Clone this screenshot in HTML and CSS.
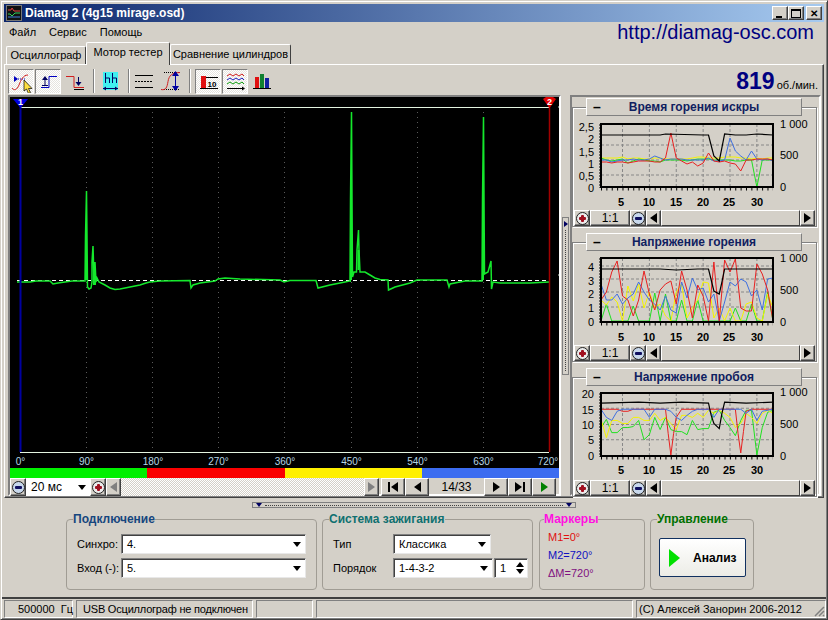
FILE: index.html
```html
<!DOCTYPE html>
<html lang="ru">
<head>
    <meta charset="UTF-8">
    <title>Diamag 2 (4g15 mirage.osd)</title>
    <link rel="stylesheet" href="styles.css">
</head>
<body>
<div class="window">
    <div class="titlebar">
        <svg class="app-icon" width="16" height="16" viewBox="0 0 16 16">
            <rect width="16" height="16" fill="#111"/>
            <rect x="0.5" y="0.5" width="15" height="15" fill="none" stroke="#777"/>
            <path d="M2 5h3l1-2 2 3h6" fill="none" stroke="#e04040"/>
            <path d="M2 9h2l2 2 3-3h5" fill="none" stroke="#30d060"/>
            <path d="M2 12h12" fill="none" stroke="#4080e0"/>
        </svg>
        <span class="title-text">Diamag 2 (4g15 mirage.osd)</span>
        <div class="win-buttons">
            <button class="win-btn"><i class="glyph-min"></i></button>
            <button class="win-btn"><i class="glyph-max"></i></button>
            <button class="win-btn close-btn">✕</button>
        </div>
    </div>

    <div class="menubar">
        <span>Файл</span><span>Сервис</span><span>Помощь</span>
        <span class="site-url">http://diamag-osc.com</span>
    </div>

    <div class="tabs">
        <div class="tab tab-first">Осциллограф</div>
        <div class="tab tab-active">Мотор тестер</div>
        <div class="tab tab-last">Сравнение цилиндров</div>
    </div>

    <div class="page">
        <!-- Toolbar -->
        <div class="toolbar">
            <button class="tool pressed">
                <svg width="24" height="24" viewBox="0 0 24 24">
                    <path d="M5 7l4 3-4 3z" fill="#0000c0"/>
                    <path d="M9 10h7" stroke="#0000c0" stroke-dasharray="1 1"/>
                    <path d="M3 19c2 3 5 2 7-3s4-10 9-10" fill="none" stroke="#d02020"/>
                    <path d="M15 11v11l2.500-2 2 4.500 2-1-2-4h3.500z" fill="#ffe040" stroke="#000" stroke-width="0.7"/>
                </svg>
            </button>
            <button class="tool pressed">
                <svg width="24" height="24" viewBox="0 0 24 24">
                    <path d="M5 18.500h8v-11h8" fill="none" stroke="#0000c0"/>
                    <path d="M9 7l-3 4h6z" fill="#000060"/>
                    <path d="M9 10v6M6 16.500h6" stroke="#000060"/>
                </svg>
            </button>
            <button class="tool flat">
                <svg width="24" height="24" viewBox="0 0 24 24">
                    <path d="M3 7.500h8v11h10" fill="none" stroke="#d02020"/>
                    <path d="M15.500 8v7" stroke="#000060"/>
                    <path d="M12.500 13h6l-3 4z" fill="#000060"/>
                    <path d="M11 20.500h10" stroke="#000"/>
                </svg>
            </button>
            <i class="sep"></i>
            <svg class="plain-icon" width="22" height="24" viewBox="0 0 22 24">
                <rect x="4" y="3" width="15" height="18" fill="#40f0f0"/>
                <path d="M6.500 4v10M6.500 9h4M10.500 9v5M13.500 4v10M13.500 9h4M17.500 9v5" fill="none" stroke="#000060"/>
                <path d="M4 19.500h15" stroke="#000060"/>
                <path d="M4 19.500l3-2v4zM19 19.500l-3-2v4z" fill="#000060"/>
            </svg>
            <i class="sep"></i>
            <svg class="plain-icon" width="20" height="24" viewBox="0 0 20 24">
                <path d="M1 6.500h18M1 18.500h18" stroke="#000"/>
                <path d="M1 12.500h18" stroke="#000" stroke-dasharray="2 1"/>
            </svg>
            <svg class="plain-icon scurve-icon" width="22" height="24" viewBox="0 0 22 24">
                <path d="M4 3.500h16M4 20.500h16" stroke="#000" stroke-dasharray="1 1"/>
                <path d="M1 20.500c5 1 6-2 7-8s4-9 12-9" fill="none" stroke="#d02020"/>
                <path d="M15.500 5v14" stroke="#0000a0"/>
                <path d="M15.500 2l-3.500 5h7zM15.500 22l-3.500-5h7z" fill="#0000a0"/>
            </svg>
            <i class="sep"></i>
            <button class="tool pressed">
                <svg width="24" height="24" viewBox="0 0 24 24">
                    <rect x="5" y="7" width="5" height="12" fill="#e01010"/>
                    <path d="M4 19.500h18M10 8.500h12" stroke="#000"/>
                    <text x="16" y="17.500" class="icon-digits">10</text>
                </svg>
            </button>
            <button class="tool pressed">
                <svg width="24" height="24" viewBox="0 0 24 24">
                    <path d="M4 7l3-2 3 2 3-2 3 2 3-2 2 2" fill="none" stroke="#d02020"/>
                    <path d="M4 11l3-2 3 2 3-2 3 2 3-2 2 2" fill="none" stroke="#2020c0"/>
                    <path d="M4 15l3-2 3 2 3-2 3 2 3-2 2 2" fill="none" stroke="#10a010"/>
                    <path d="M4 19.500h17" stroke="#000"/>
                    <path d="M22 19.500l-3-2v4z" fill="#000"/>
                </svg>
            </button>
            <svg class="plain-icon bars-icon" width="22" height="24" viewBox="0 0 22 24">
                <rect x="4" y="8" width="4" height="11" fill="#e01010"/>
                <rect x="9" y="5" width="4" height="14" fill="#108030"/>
                <rect x="14" y="9" width="4" height="10" fill="#1020a0"/>
                <path d="M2 19.500h18" stroke="#000"/>
            </svg>
            <div class="rpm"><b>819</b> <span>об./мин.</span></div>
        </div>

        <div class="workspace">
            <!-- Scope -->
            <div class="scope-col">
                <svg class="scope" width="549" height="371" viewBox="10 97 549 371">
                    <rect x="10" y="97" width="549" height="371" fill="#000"/>
                    <g class="scope-grid">
                        <path d="M86.500 112V452M152.500 112V452M218.500 112V452M284.500 112V452M351.500 112V452M417.500 112V452M483.500 112V452"/>
                    </g>
                    <path d="M20 107.500H549M20 452.500H549" stroke="#e4f4e0" fill="none"/>
                    <path d="M17 280.500H549" stroke="#fff" stroke-dasharray="4 3" fill="none"/>
                    <path d="M558 107h1M558 275h1" stroke="#d0e0d0"/>
                    <polyline class="trace" points="17,282 30,282 36,281 50,281 53,284 58,283 72,281 85,281 85.500,236 86.500,191 87,236 87.500,287 89,289 91,288 92,282 92,262 93,246 93.500,262 94,285 95,262 96,282 97,278 99,282 105,285 110,288 115,289.500 120,289 130,287 140,285 146,283 150,282 160,281 190,280.500 191,288 193,285 200,283 215,281 218,279 225,278 240,279 280,280 284,282 290,280.500 316,280.500 318,288 330,285 345,282 350,281 350.500,199 351.500,112 352,199 352.500,277 354,272 356.500,272 357,250 358.500,230 359,250 360,272 365,272 370,275 375,278 380,279.500 388,280 388.500,290 395,287 410,283 417,280 430,280 447,280 449,287 450,284 465,281 482,281 482.500,199 483.500,117 484,199 484.500,274 488,272 491,261 491.500,289 493,282 500,283 530,283 549,282"/>
                    <path class="trace-fat" d="M351 280V199M483 280V199M86 280V237M94 285V262M358.500 270V250M95 285V270M350 281h1"/>
                    <path d="M20.500 100V452" stroke="#0000a0" stroke-width="2"/>
                    <path d="M549.500 100V452" stroke="#a00000" stroke-width="1.500"/>
                    <path d="M13 99h15l-7.500 9z" fill="#0000e0"/>
                    <path d="M543 99l3-2h7l3 2-6.500 9z" fill="#e00000"/>
                    <text class="marker-no" x="20.500" y="105">1</text>
                    <text class="marker-no" x="549.500" y="105">2</text>
                    <g class="deg-labels">
                        <text x="20.500" y="465">0°</text>
                        <text x="86.500" y="465">90°</text>
                        <text x="153" y="465">180°</text>
                        <text x="218.500" y="465">270°</text>
                        <text x="285" y="465">360°</text>
                        <text x="351.500" y="465">450°</text>
                        <text x="417.500" y="465">540°</text>
                        <text x="483.500" y="465">630°</text>
                        <text x="548" y="465">720°</text>
                    </g>
                </svg>
                <div class="cyl-bar"><i class="cyl-green"></i><i class="cyl-red"></i><i class="cyl-yellow"></i><i class="cyl-blue"></i></div>
                <div class="scope-controls">
                    <button class="zoom-btn"><i class="zoom-minus"></i></button>
                    <div class="combo scale-combo">20 мс<i class="arrow"></i></div>
                    <button class="zoom-btn"><i class="zoom-plus"></i></button>
                    <button class="arrow-btn"><i class="tri-left muted"></i></button>
                    <div class="dither"></div>
                    <button class="arrow-btn"><i class="tri-right muted"></i></button>
                    <button class="nav-btn"><i class="bar"></i><i class="tri-left"></i></button>
                    <button class="nav-btn"><i class="tri-left"></i></button>
                    <span class="frame-no">14/33</span>
                    <button class="nav-btn"><i class="tri-right"></i></button>
                    <button class="nav-btn"><i class="tri-right"></i><i class="bar"></i></button>
                    <button class="nav-btn"><i class="tri-right tri-green"></i></button>
                </div>
            </div>

            <div class="v-splitter"><i class="tri-right small"></i><span class="grip-v"></span></div>

            <!-- Charts -->
            <div class="charts-col">
                <div class="chart">
                    <div class="chart-head"><span class="collapse">–</span><span class="chart-title">Время горения искры</span></div>
                    <div class="chart-box">
                        <svg class="chart-plot" width="243" height="102" viewBox="0 0 243 102">
                            <g class="y-labels">
                                <text x="21" y="23">2,5</text><text x="21" y="35">2</text><text x="21" y="48">1,5</text><text x="21" y="60">1</text><text x="21" y="72">0,5</text><text x="21" y="84">0</text>
                            </g>
                            <g class="y2-labels">
                                <text x="207" y="20">1 000</text><text x="207" y="51">500</text><text x="207" y="83">0</text>
                            </g>
                            <g class="x-labels">
                                <text x="48" y="98">5</text><text x="76" y="98">10</text><text x="103" y="98">15</text><text x="130" y="98">20</text><text x="156" y="98">25</text><text x="184" y="98">30</text>
                            </g>
                            <svg x="28" y="16" width="172" height="63" viewBox="1 0 32 63" preserveAspectRatio="none">
                                <path class="grid" d="M5 0V63M10 0V63M15 0V63M20 0V63M25 0V63M30 0V63M1 21H33M1 36H33M1 51H33"/>
                                <polyline class="s-yellow" points="1,34 2,34 3,34 4,34 5,33 6,35 7,34 8,34 9,35 10,35 11,34 12,34 13,35 14,35 15,35 16,35 17,35 18,34 19,33 20,33 21,34 22,34 23,34 24,33 25,33 26,33 27,34 28,34 29,35 30,34 31,35 32,34 33,34"/>
                                <polyline class="s-green" points="1,34 2,36 3,37 4,36 5,35 6,39 7,37 8,35 9,36 10,37 11,37 12,38 13,36 14,36 15,36 16,36 17,37 18,36 19,35 20,35 21,35 22,36 23,36 24,36 25,36 26,37 27,37 28,36 29,36 30,63 31,36 32,36 33,36"/>
                                <polyline class="s-blue" points="1,36 2,36 3,38 4,37 5,36 6,36 7,35 8,36 9,36 10,35 11,32 12,34 13,36 14,35 15,35 16,35 17,36 18,36 19,36 20,36 21,34 22,37 23,37 24,36 25,14 26,27 27,32 28,36 29,27 30,35 31,36 32,35 33,37"/>
                                <polyline class="s-red" points="1,38 2,38 3,39 4,38 5,38 6,39 7,38 8,37 9,37 10,37 11,38 12,38 13,34 14,9 15,34 16,37 17,40 18,38 19,42 20,39 21,29 22,37 23,38 24,37 25,39 26,40 27,47 28,36 29,36 30,35 31,35 32,35 33,36"/>
                                <polyline class="s-black" points="1,11 5,11 9,11 12,11 13,10 20,11 21,11 22,32 23,37 24,10 26,11 28,11 30,10 33,11"/>
                            </svg>
                            <rect class="frame" x="28" y="16" width="172" height="63"/>
                            <path class="axis-left" d="M27.500 16V80"/>
                            <path class="x-ticks" d="M28 81H200"/>
                        </svg>
                        <div class="chart-controls">
                            <button class="zoom-btn"><i class="zoom-plus"></i></button>
                            <button class="ratio-btn">1:1</button>
                            <button class="zoom-btn"><i class="zoom-minus"></i></button>
                            <button class="arrow-btn"><i class="tri-left"></i></button>
                            <div class="hscroll"></div>
                            <button class="arrow-btn"><i class="tri-right"></i></button>
                        </div>
                    </div>
                </div>

                <div class="chart">
                    <div class="chart-head"><span class="collapse">–</span><span class="chart-title">Напряжение горения</span></div>
                    <div class="chart-box">
                        <svg class="chart-plot" width="243" height="102" viewBox="0 0 243 102">
                            <g class="y-labels">
                                <text x="21" y="28">4</text><text x="21" y="42">3</text><text x="21" y="55">2</text><text x="21" y="69">1</text><text x="21" y="83">0</text>
                            </g>
                            <g class="y2-labels">
                                <text x="207" y="19">1 000</text><text x="207" y="51">500</text><text x="207" y="83">0</text>
                            </g>
                            <g class="x-labels">
                                <text x="48" y="98">5</text><text x="76" y="98">10</text><text x="103" y="98">15</text><text x="130" y="98">20</text><text x="156" y="98">25</text><text x="184" y="98">30</text>
                            </g>
                            <svg x="28" y="15" width="172" height="64" viewBox="1 0 32 64" preserveAspectRatio="none">
                                <path class="grid" d="M5 0V64M10 0V64M15 0V64M20 0V64M25 0V64M30 0V64M1 8H33M1 21H33M1 34H33M1 49H33"/>
                                <polyline class="s-green" points="1,63 2,46 3,63 4,63 5,63 6,63 7,48 8,63 9,63 10,63 11,35 12,63 13,36 14,63 15,63 16,42 17,63 18,63 19,42 20,63 21,63 22,63 23,63 24,63 25,63 26,50 27,63 28,63 29,46 30,63 31,63 32,34 33,63"/>
                                <polyline class="s-yellow" points="1,42 2,47 3,39 4,44 5,63 6,28 7,43 8,26 9,50 10,34 11,50 12,46 13,58 14,63 15,34 16,26 17,60 18,50 19,42 20,24 21,25 22,60 23,50 24,63 25,50 26,63 27,63 28,46 29,44 30,60 31,63 32,36 33,50"/>
                                <polyline class="s-blue" points="1,26 2,42 3,42 4,36 5,46 6,40 7,36 8,24 9,34 10,42 11,46 12,52 13,38 14,52 15,55 16,24 17,40 18,20 19,32 20,30 21,44 22,36 23,63 24,44 25,24 26,28 27,21 28,24 29,38 30,32 31,52 32,21 33,20"/>
                                <polyline class="s-red" points="1,42 2,34 3,14 4,3 5,38 6,42 7,58 8,42 9,13 10,36 11,52 12,32 13,26 14,23 15,46 16,13 17,32 18,60 19,27 20,38 21,63 22,4 23,63 24,2 25,14 26,1 27,50 28,53 29,53 30,6 31,16 32,32 33,63"/>
                                <polyline class="s-black" points="1,11 12,11 15,12 19,11 21,11 21.500,22 22,33 23,36 23.500,24 24,11 33,11"/>
                            </svg>
                            <rect class="frame" x="28" y="15" width="172" height="64"/>
                            <path class="axis-left" d="M27.500 15V80"/>
                            <path class="x-ticks" d="M28 81H200"/>
                        </svg>
                        <div class="chart-controls">
                            <button class="zoom-btn"><i class="zoom-plus"></i></button>
                            <button class="ratio-btn">1:1</button>
                            <button class="zoom-btn"><i class="zoom-minus"></i></button>
                            <button class="arrow-btn"><i class="tri-left"></i></button>
                            <div class="hscroll"></div>
                            <button class="arrow-btn"><i class="tri-right"></i></button>
                        </div>
                    </div>
                </div>

                <div class="chart">
                    <div class="chart-head"><span class="collapse">–</span><span class="chart-title">Напряжение пробоя</span></div>
                    <div class="chart-box">
                        <svg class="chart-plot" width="243" height="102" viewBox="0 0 243 102">
                            <g class="y-labels">
                                <text x="21" y="20">20</text><text x="21" y="36">15</text><text x="21" y="51">10</text><text x="21" y="66">5</text><text x="21" y="82">0</text>
                            </g>
                            <g class="y2-labels">
                                <text x="207" y="18">1 000</text><text x="207" y="50">500</text><text x="207" y="82">0</text>
                            </g>
                            <g class="x-labels">
                                <text x="48" y="96">5</text><text x="76" y="96">10</text><text x="103" y="96">15</text><text x="130" y="96">20</text><text x="156" y="96">25</text><text x="184" y="96">30</text>
                            </g>
                            <svg x="28" y="15" width="172" height="63" viewBox="1 0 32 62" preserveAspectRatio="none">
                                <path class="grid" d="M5 0V62M10 0V62M15 0V62M20 0V62M25 0V62M30 0V62M1 15H33M1 31H33M1 46H33"/>
                                <polyline class="s-green" points="1,34 2,26 3,39 4,39 5,34 6,34 7,33 8,27 9,46 10,41 11,24 12,36 13,24 14,36 15,38 16,38 17,41 18,27 19,36 20,35 21,35 22,19 23,17 24,27 25,34 26,42 27,27 28,17 29,17 30,61 31,34 32,19 33,17"/>
                                <polyline class="s-yellow" points="1,26 2,44 3,27 4,27 5,30 6,30 7,24 8,24 9,27 10,27 11,20 12,27 13,24 14,30 15,36 16,22 17,22 18,24 19,20 20,24 21,17 22,20 23,17 24,20 25,24 26,34 27,30 28,20 29,24 30,30 31,20 32,17 33,20"/>
                                <polyline class="s-red" points="1,16 4,16 5,18 6,18 7,16 9,16 10,16 11,16 12,16 13,16 13.500,40 14,61 14.500,40 15,24 16,16 19,16 21,16 22,16 25,16 26,16 26.500,40 27,59 27.500,38 28,18 29,16 33,16"/>
                                <polyline class="s-blue" points="1,16 2,24 3,27 4,18 5,16 9,16 10,24 11,16 13,16 14,18 15,24 16,27 17,22 18,18 19,16 21,16 22,24 23,16 24,16 27,16 28,20 29,16 30,27 31,18 33,16"/>
                                <polyline class="s-black" points="1,10 8,9 12,10 16,9 21,10 21.500,22 22,30 23,35 23.500,20 24,9 28,10 33,9"/>
                            </svg>
                            <rect class="frame" x="28" y="15" width="172" height="63"/>
                            <path class="axis-left" d="M27.500 15V79"/>
                            <path class="x-ticks" d="M28 80H200"/>
                        </svg>
                        <div class="chart-controls">
                            <button class="zoom-btn"><i class="zoom-plus"></i></button>
                            <button class="ratio-btn">1:1</button>
                            <button class="zoom-btn"><i class="zoom-minus"></i></button>
                            <button class="arrow-btn"><i class="tri-left"></i></button>
                            <div class="hscroll"></div>
                            <button class="arrow-btn"><i class="tri-right"></i></button>
                        </div>
                    </div>
                </div>
            </div>
        </div>
    </div>

    <!-- Bottom panels -->
    <div class="bottom">
        <div class="h-splitter"><i class="tri-down"></i><span class="grip-h"></span><i class="tri-down"></i></div>
        <div class="groups">
            <fieldset class="group group-conn">
                <legend class="legend-navy">Подключение</legend>
                <div class="form-row"><label>Синхро:</label><div class="combo wide-combo">4.<i class="arrow"></i></div></div>
                <div class="form-row"><label>Вход (-):</label><div class="combo wide-combo">5.<i class="arrow"></i></div></div>
            </fieldset>
            <fieldset class="group group-ign">
                <legend class="legend-teal">Система зажигания</legend>
                <div class="form-row"><label>Тип</label><div class="combo type-combo">Классика<i class="arrow"></i></div></div>
                <div class="form-row">
                    <label>Порядок</label>
                    <div class="combo order-combo">1-4-3-2<i class="arrow"></i></div>
                    <div class="combo spin">1<span class="spin-arrows"><i class="arrow-up"></i><i class="arrow"></i></span></div>
                </div>
            </fieldset>
            <fieldset class="group group-markers">
                <legend class="legend-pink">Маркеры</legend>
                <div class="marker m1">M1=0°</div>
                <div class="marker m2">M2=720°</div>
                <div class="marker m3">ΔM=720°</div>
            </fieldset>
            <fieldset class="group group-ctrl">
                <legend class="legend-green">Управление</legend>
                <button class="run-btn"><i class="run-tri"></i><span>Анализ</span></button>
            </fieldset>
        </div>
    </div>

    <div class="statusbar">
        <div class="status st-freq">500000 &nbsp;Гц</div>
        <div class="status st-usb">USB Осциллограф не подключен</div>
        <div class="status st-empty1"></div>
        <div class="status st-empty2"></div>
        <div class="status st-copy">(C) Алексей Занорин 2006-2012
            <svg class="size-grip" width="12" height="12" viewBox="0 0 12 12"><path d="M11 2L2 11M11 6L6 11M11 10L10 11" stroke="#808080" stroke-width="1.500"/></svg>
        </div>
    </div>
</div>
</body>
</html>
```

FILE: styles.css
```css
:root {
    --face: #d4d0c8;
    --shadow: #808080;
    --dark: #404040;
}

* {
    box-sizing: border-box;
}

body {
    margin: 0;
    background: var(--face);
    font-family: "Liberation Sans", Arial, sans-serif;
    font-size: 11px;
    color: #000;
}

i {
    display: block;
}

button {
    font-family: inherit;
    padding: 0;
    margin: 0;
    background: var(--face);
    border: 1px solid;
    border-color: #fff var(--dark) var(--dark) #fff;
    box-shadow: inset -1px -1px 0 var(--shadow);
    display: flex;
    align-items: center;
    justify-content: center;
}

.window {
    width: 828px;
    height: 620px;
    padding: 3px;
    display: flex;
    flex-direction: column;
    border: 1px solid;
    border-color: var(--face) var(--dark) var(--dark) var(--face);
    box-shadow: inset 1px 1px 0 #fff, inset -1px -1px 0 var(--shadow);
    overflow: hidden;
}

/* Title bar */
.titlebar {
    height: 18px;
    flex: none;
    display: flex;
    align-items: center;
    gap: 3px;
    padding: 0 2px;
    background: linear-gradient(to right, #0a246a, #a6caf0);
    color: #fff;
}

.title-text {
    font-size: 12px;
    font-weight: bold;
}

.win-buttons {
    margin-left: auto;
    display: flex;
    align-items: center;
}

.win-btn {
    width: 16px;
    height: 14px;
    font-size: 10px;
    font-weight: bold;
    color: #000;
    position: relative;
}

.close-btn {
    margin-left: 2px;
}

.glyph-min {
    width: 6px;
    height: 2px;
    background: #000;
    margin-top: 7px;
    margin-right: 2px;
}

.glyph-max {
    width: 10px;
    height: 9px;
    border: 1px solid #000;
    border-top-width: 2px;
}

/* Menu */
.menubar {
    height: 20px;
    flex: none;
    display: flex;
    align-items: center;
    gap: 13px;
    padding-left: 5px;
}

.site-url {
    margin-left: auto;
    margin-right: 10px;
    font-size: 20px;
    color: #000080;
}

/* Tabs */
.tabs {
    height: 22px;
    flex: none;
    display: flex;
    align-items: flex-end;
    padding-left: 2px;
    position: relative;
    z-index: 1;
}

.tab {
    background: var(--face);
    border: 1px solid;
    border-color: #fff var(--dark) transparent #fff;
    border-bottom: 0;
    border-radius: 2px 2px 0 0;
    text-align: center;
    white-space: nowrap;
}

.tab-first {
    width: 80px;
    height: 18px;
    line-height: 17px;
}

.tab-active {
    width: 84px;
    height: 23px;
    line-height: 18px;
    margin-bottom: -1px;
}

.tab-last {
    width: 121px;
    height: 20px;
    line-height: 19px;
}

/* Page */
.page {
    height: 434px;
    flex: none;
    border: 1px solid;
    border-color: #fff var(--dark) var(--dark) #fff;
    box-shadow: inset -1px -1px 0 var(--shadow);
    padding: 2px 2px 1px 3px;
    display: flex;
    flex-direction: column;
}

.toolbar {
    height: 28px;
    flex: none;
    display: flex;
    align-items: center;
    gap: 1px;
}

.tool {
    width: 26px;
    height: 25px;
    background-color: var(--face);
}

.tool.flat {
    border-color: transparent;
    box-shadow: none;
}

.tool.pressed {
    border-color: var(--shadow) #fff #fff var(--shadow);
    box-shadow: none;
    background-image: repeating-conic-gradient(#fff 0 25%, #e6e4df 0 50%);
    background-size: 2px 2px;
}

.tool svg,
.plain-icon {
    display: block;
    flex: none;
}

.sep {
    width: 2px;
    height: 24px;
    margin: 0 3px 0 4px;
    border-left: 1px solid var(--shadow);
    border-right: 1px solid #fff;
}

.plain-icon {
    margin-right: 2px;
}

.scurve-icon {
    margin-left: 3px;
}

.bars-icon {
    margin-left: 2px;
}

.icon-digits {
    font-size: 8px;
    font-weight: bold;
    font-family: "Liberation Sans", sans-serif;
    text-anchor: middle;
}

.rpm {
    margin-left: auto;
    margin-right: 3px;
    display: flex;
    align-items: baseline;
    gap: 2px;
}

.rpm b {
    font-size: 23px;
    color: #000080;
}

.workspace {
    flex: 1;
    min-height: 0;
    display: flex;
}

/* Scope */
.scope-col {
    width: 553px;
    flex: none;
    border: 2px solid;
    border-color: var(--shadow) #fff #fff var(--shadow);
    display: flex;
    flex-direction: column;
}

.scope {
    display: block;
    flex: none;
}

.scope-grid path {
    stroke: #5a5a5a;
    stroke-dasharray: 1 4;
    fill: none;
}

.trace {
    fill: none;
    stroke: #14e82c;
    stroke-width: 1.500;
}

.trace-fat {
    stroke: #14e82c;
    stroke-width: 2;
    fill: none;
}

.marker-no {
    fill: #fff;
    font-size: 9px;
    font-weight: bold;
    text-anchor: middle;
}

.deg-labels text {
    fill: #b6d6e4;
    font-size: 10px;
    text-anchor: middle;
}

.cyl-bar {
    height: 10px;
    flex: none;
    display: flex;
}

.cyl-bar i {
    flex: 1;
}

.cyl-green { background: #00f000; }
.cyl-red { background: #fa0000; }
.cyl-yellow { background: #fff000; }
.cyl-blue { background: #3c6cf0; }

.scope-controls {
    height: 18px;
    flex: none;
    display: flex;
    align-items: stretch;
    padding-right: 3px;
}

.zoom-btn {
    width: 16px;
    flex: none;
}

.zoom-plus,
.zoom-minus {
    width: 13px;
    height: 13px;
    border-radius: 50%;
    border: 1px solid #202020;
    position: relative;
    background: #ececec;
}

.zoom-minus {
    background: #c8d8ec;
}

.zoom-minus::before,
.zoom-plus::before {
    content: "";
    position: absolute;
    left: 2px;
    top: 4px;
    width: 7px;
    height: 3px;
    border-radius: 1px;
    background: #101060;
}

.zoom-plus::before {
    background: #a01020;
}

.zoom-plus::after {
    content: "";
    position: absolute;
    left: 4px;
    top: 2px;
    width: 3px;
    height: 7px;
    border-radius: 1px;
    background: #a01020;
}

.arrow-btn {
    width: 15px;
    flex: none;
}

.dither {
    flex: 1;
    background-image: repeating-conic-gradient(#fff 0 25%, var(--face) 0 50%);
    background-size: 2px 2px;
}

.dither + .arrow-btn {
    margin-right: 2px;
}

.nav-btn {
    width: 24px;
    flex: none;
    gap: 1px;
}

.frame-no {
    width: 55px;
    flex: none;
    text-align: center;
    line-height: 18px;
    font-size: 12px;
}

.tri-left {
    width: 0;
    height: 0;
    border: 5px solid transparent;
    border-left-width: 0;
    border-right: 7px solid #000;
}

.tri-right {
    width: 0;
    height: 0;
    border: 5px solid transparent;
    border-right-width: 0;
    border-left: 7px solid #000;
}

.tri-left.muted {
    border-right-color: var(--shadow);
}

.tri-right.muted {
    border-left-color: var(--shadow);
}

.tri-green {
    border-left-color: #008000;
}

.tri-right.small {
    border-width: 3px 0 3px 4px;
    border-left-color: #000060;
}

.bar {
    width: 2px;
    height: 10px;
    background: #000;
}

.v-splitter {
    width: 7px;
    height: 158px;
    margin: 122px 0 0 1px;
    flex: none;
    border: 1px solid var(--shadow);
    padding: 3px 1px;
    display: flex;
    flex-direction: column;
    align-items: center;
    gap: 3px;
}

.grip-v {
    flex: 1;
    width: 1px;
    border-left: 1px dotted var(--dark);
}

/* Charts */
.charts-col {
    width: 251px;
    margin-left: 1px;
    flex: none;
    border: 2px solid;
    border-color: var(--shadow) #fff #fff var(--shadow);
    padding-top: 1px;
    display: flex;
    flex-direction: column;
}

.chart {
    height: 135px;
    flex: none;
}

.chart-head {
    margin: 0 17px 0 14px;
    height: 18px;
    border: 1px solid;
    border-color: #fff var(--shadow) var(--shadow) #fff;
    background: var(--face);
    display: flex;
    align-items: center;
    position: relative;
    z-index: 1;
}

.collapse {
    width: 20px;
    text-align: center;
    font-weight: bold;
    font-size: 14px;
}

.chart-title {
    flex: 1;
    margin-right: 20px;
    text-align: center;
    font-size: 12px;
    font-weight: bold;
    color: #102060;
}

.chart-box {
    width: 245px;
    margin-top: -9px;
    border: 1px solid var(--shadow);
    box-shadow: inset 1px 1px 0 #fff, 1px 1px 0 #fff;
}

.chart-plot {
    display: block;
}

.y-labels text {
    font-size: 11px;
    text-anchor: end;
}

.y2-labels text {
    font-size: 11px;
}

.x-labels text {
    font-size: 11px;
    font-weight: bold;
    text-anchor: middle;
}

.frame {
    fill: none;
    stroke: #000;
    stroke-width: 2;
}

.axis-left {
    fill: none;
    stroke: #000;
    stroke-width: 2;
    stroke-dasharray: 2 1;
}

.x-ticks {
    stroke: #000;
    stroke-width: 3;
    stroke-dasharray: 1 4.370;
    fill: none;
}

.grid {
    fill: none;
    stroke: #888888;
    stroke-dasharray: 3 2;
    vector-effect: non-scaling-stroke;
}

polyline {
    vector-effect: non-scaling-stroke;
}

.s-black,
.s-red,
.s-blue,
.s-green,
.s-yellow {
    fill: none;
    stroke-width: 1;
}

.s-black { stroke: #000; stroke-width: 1.200; }
.s-red { stroke: #e82020; }
.s-blue { stroke: #4070e0; }
.s-green { stroke: #20e020; }
.s-yellow { stroke: #f4f400; }

.chart-controls {
    height: 16px;
    margin: 0 1px;
    display: flex;
    align-items: stretch;
}

.ratio-btn {
    width: 40px;
    font-size: 12px;
}

.hscroll {
    flex: 1;
    background: var(--face);
    border: 1px solid;
    border-color: #fff var(--dark) var(--dark) #fff;
}

/* Bottom area */
.bottom {
    flex: 1;
    min-height: 0;
    display: flex;
    flex-direction: column;
}

.h-splitter {
    width: 324px;
    height: 6px;
    margin: 4px 0 0 248px;
    border: 1px solid var(--shadow);
    display: flex;
    align-items: center;
    justify-content: space-between;
    padding: 0 3px;
    flex: none;
}

.tri-down {
    width: 0;
    height: 0;
    border: 3px solid transparent;
    border-top: 4px solid #000060;
    border-bottom-width: 0;
}

.grip-h {
    flex: 1;
    margin: 0 3px;
    border-top: 1px dotted var(--dark);
}

.groups {
    display: flex;
    gap: 5px;
    padding-left: 62px;
    margin-top: 4px;
}

.group {
    margin: 0;
    height: 78px;
    padding: 8px 0 0 10px;
    border: 1px solid #a09c94;
    border-radius: 4px;
    min-width: 0;
    flex: none;
}

.group legend {
    margin-left: -4px;
    padding: 0;
    font-weight: bold;
    font-size: 12px;
}

.legend-navy { color: #16467e; }
.legend-teal { color: #107070; }
.legend-pink { color: #ff10e0; }
.legend-green { color: #007000; }

.group-conn { width: 251px; }
.group-ign { width: 211px; }
.group-markers { width: 106px; padding: 2px 0 0 8px; margin-left: 1px; }
.group-ctrl { width: 104px; padding: 5px 0 0 8px; }
.group-ctrl legend { margin-left: -2px; }

.form-row {
    display: flex;
    align-items: center;
    margin-bottom: 4px;
}

.form-row label {
    flex: none;
    white-space: nowrap;
}

.group-conn .form-row label {
    width: 44px;
}

.group-ign .form-row label {
    width: 60px;
}

.combo {
    height: 20px;
    background: #fff;
    border: 1px solid;
    border-color: var(--shadow) #e8e8e8 #e8e8e8 var(--shadow);
    box-shadow: inset 1px 1px 0 var(--dark);
    display: flex;
    align-items: center;
    justify-content: space-between;
    padding: 0 4px 0 5px;
    font-size: 11px;
}

.scale-combo {
    width: 64px;
    height: 18px;
    border: 0;
    box-shadow: none;
    font-size: 12px;
    flex: none;
}

.wide-combo { width: 185px; }
.type-combo { width: 98px; }
.order-combo { width: 100px; }

.spin {
    width: 34px;
    margin-left: 1px;
    padding-right: 3px;
}

.spin-arrows {
    display: flex;
    flex-direction: column;
    gap: 2px;
}

.arrow {
    width: 0;
    height: 0;
    border: 4px solid transparent;
    border-top: 5px solid #000;
    border-bottom-width: 0;
}

.arrow-up {
    width: 0;
    height: 0;
    border: 4px solid transparent;
    border-bottom: 5px solid #000;
    border-top-width: 0;
}

.marker {
    height: 18px;
    line-height: 18px;
    font-size: 11px;
}

.m1 { color: #e01010; }
.m2 { color: #1010c0; }
.m3 { color: #801080; }

.run-btn {
    width: 87px;
    height: 39px;
    margin-top: 7px;
    font-weight: bold;
    font-size: 12px;
    gap: 13px;
    justify-content: flex-start;
    padding-left: 9px;
    border: 1px solid #103060;
    border-radius: 2px;
    background: linear-gradient(#ffffff, #ecece6);
    box-shadow: none;
}

.run-tri {
    width: 0;
    height: 0;
    border: 9px solid transparent;
    border-right-width: 0;
    border-left: 11px solid #00e000;
}

/* Status bar */
.statusbar {
    height: 21px;
    flex: none;
    display: flex;
    gap: 3px;
    border-top: 2px solid var(--dark);
    padding-top: 1px;
    margin: 0 -2px -2px;
    padding-left: 2px;
}

.status {
    border: 1px solid;
    border-color: var(--shadow) #fff #fff var(--shadow);
    line-height: 16px;
    white-space: nowrap;
    padding-left: 6px;
    letter-spacing: -0.2px;
    position: relative;
}

.st-freq { width: 69px; padding-left: 13px; letter-spacing: 0; }
.st-usb { width: 177px; }
.st-empty1 { width: 57px; }
.st-empty2 { width: 317px; }
.st-copy { flex: 1; padding-left: 2px; letter-spacing: 0; }

.size-grip {
    position: absolute;
    right: 0;
    bottom: 0;
}
```
